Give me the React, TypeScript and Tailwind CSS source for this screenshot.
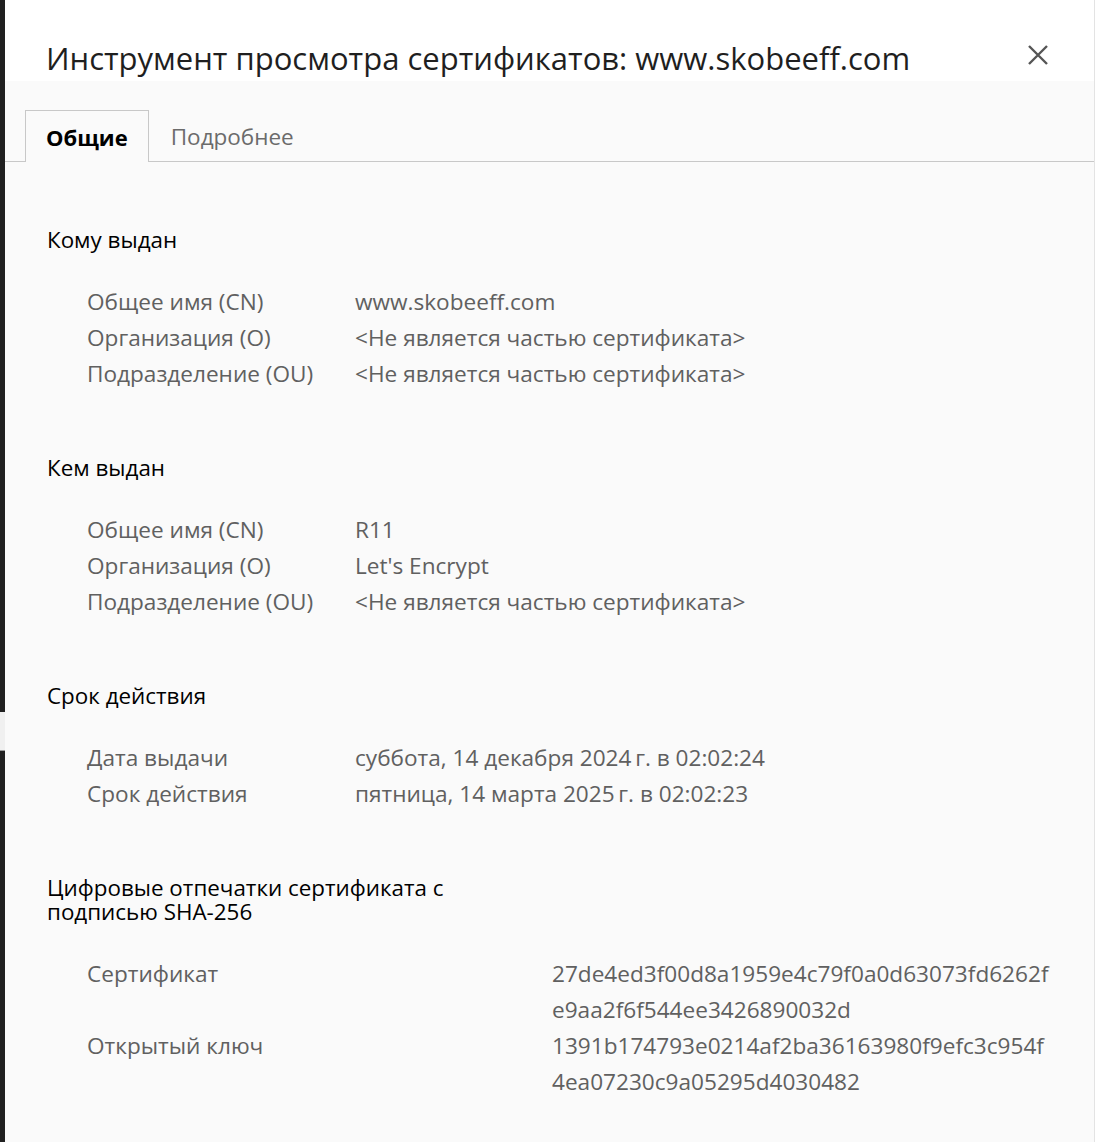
import React, { useState } from 'react';

type Row = { label: string; value: string[] };
type Section = { title: string[]; rows: Row[]; wide?: boolean };

const NOT_PART = '<Не является частью сертификата>';

const sections: Section[] = [
  {
    title: ['Кому выдан'],
    rows: [
      { label: 'Общее имя (CN)', value: ['www.skobeeff.com'] },
      { label: 'Организация (O)', value: [NOT_PART] },
      { label: 'Подразделение (OU)', value: [NOT_PART] },
    ],
  },
  {
    title: ['Кем выдан'],
    rows: [
      { label: 'Общее имя (CN)', value: ['R11'] },
      { label: 'Организация (O)', value: ["Let's Encrypt"] },
      { label: 'Подразделение (OU)', value: [NOT_PART] },
    ],
  },
  {
    title: ['Срок действия'],
    rows: [
      { label: 'Дата выдачи', value: ['суббота, 14 декабря 2024\u2009г. в 02:02:24'] },
      { label: 'Срок действия', value: ['пятница, 14 марта 2025\u2009г. в 02:02:23'] },
    ],
  },
  {
    title: ['Цифровые отпечатки сертификата с', 'подписью SHA-256'],
    wide: true,
    rows: [
      { label: 'Сертификат', value: ['27de4ed3f00d8a1959e4c79f0a0d63073fd6262f', 'e9aa2f6f544ee3426890032d'] },
      { label: 'Открытый ключ', value: ['1391b174793e0214af2ba36163980f9efc3c954f', '4ea07230c9a05295d4030482'] },
    ],
  },
];

export default function App() {
  const [tab, setTab] = useState<'general' | 'details'>('general');

  return (
    <div className="flex min-h-[1142px] w-[1095px] bg-[#202020] font-['Open_Sans',sans-serif]">
      {/* кусок окна за диалогом */}
      <div className="w-[5px] shrink-0 pt-[712px]">
        <div className="h-[39px] border-b border-[#9a9a9a] bg-[#f0f0f0]" />
      </div>

      <div className="flex flex-1 flex-col border-r border-[#e3e3e3] bg-[#fafafa]">
        <div className="flex h-[81px] items-end justify-between bg-white pl-[41px] pr-[44px]">
          <h1 className="pb-[3px] text-[31px] leading-[40px] text-[#1f1f1f]">
            Инструмент просмотра сертификатов: www.skobeeff.com
          </h1>
          <button className="mb-[14px] flex h-[24px] w-[24px] items-center justify-center text-[#555]">
            <svg width="22" height="22" viewBox="0 0 22 22" fill="none" stroke="currentColor" strokeWidth="2.4">
              <path d="M2 2 L20 20 M20 2 L2 20" />
            </svg>
          </button>
        </div>

        <div className="flex h-[81px] items-end border-b border-[#c8c8c8] pl-[20px]">
          <button
            onClick={() => setTab('general')}
            className={`-mb-px h-[52px] px-[20px] pt-[2px] text-[22px] ${
              tab === 'general'
                ? 'border border-b-0 border-[#c8c8c8] bg-[#fafafa] font-bold text-black'
                : 'text-[#6b6b6b]'
            }`}
          >
            Общие
          </button>
          <button
            onClick={() => setTab('details')}
            className={`-mb-px h-[52px] px-[22px] pt-[2px] text-[22.5px] ${
              tab === 'details'
                ? 'border border-b-0 border-[#c8c8c8] bg-[#fafafa] font-bold text-black'
                : 'text-[#6b6b6b]'
            }`}
          >
            Подробнее
          </button>
        </div>

        <div className="flex flex-col gap-[64px] pl-[42px] pr-[40px] pt-[66px] pb-[40px]">
          {sections.map((s) => (
            <div key={s.title[0]} className="flex flex-col gap-[32px]">
              <h2 className="text-[22.4px] leading-[24px] text-black">
                {s.title.map((t) => (
                  <div key={t} className="h-[24px] leading-[24px]">
                    {t}
                  </div>
                ))}
              </h2>
              <div className="flex flex-col pl-[40px]">
                {s.rows.map((r) => (
                  <div key={r.label} className="flex text-[22.6px] leading-[36px] text-[#606060]">
                    <div className={s.wide ? 'w-[465px] shrink-0' : 'w-[268px] shrink-0'}>{r.label}</div>
                    <div>
                      {r.value.map((v) => (
                        <div key={v}>{v}</div>
                      ))}
                    </div>
                  </div>
                ))}
              </div>
            </div>
          ))}
        </div>
      </div>
    </div>
  );
}
